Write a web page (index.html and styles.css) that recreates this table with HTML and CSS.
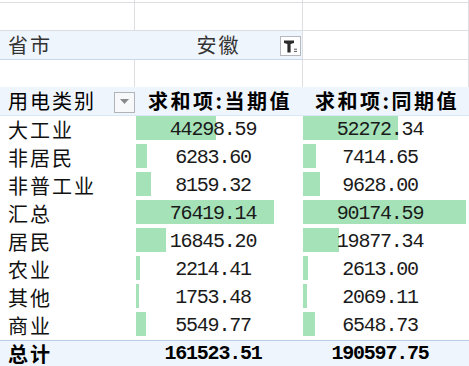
FILE: index.html
```html
<!DOCTYPE html>
<html lang="zh-CN">
<head>
<meta charset="utf-8">
<title>数据透视表</title>
<link rel="stylesheet" href="styles.css">
</head>
<body>
<div class="sheet">
  <div class="row grid r-edge"><div class="cell"></div><div class="cell"></div><div class="cell"></div></div>
  <div class="row grid r-blank"><div class="cell"></div><div class="cell"></div><div class="cell"></div></div>
  <div class="row r-filter">
    <div class="cell fa"><span class="txt">省市</span></div>
    <div class="cell fb"><span class="txt">安徽</span>
      <span class="filter-btn"><svg width="19" height="18" viewBox="0 0 19 18"><path d="M3 3.5h10v2.4l-3.4 1.1v8.6H6.4V7L3 5.9z" fill="#2b2b2b"/><path d="M13 12.2h3M13 14.4h3" stroke="#555" stroke-width="1"/></svg></span>
    </div>
    <div class="cell fc"></div>
  </div>
  <div class="row grid r-blank2"><div class="cell"></div><div class="cell"></div><div class="cell"></div></div>
  <div class="row r-head">
    <div class="cell ha"><span class="txt">用电类别</span><span class="dd-btn"><svg width="9" height="5" viewBox="0 0 9 5"><path d="M0 0h9L4.5 5z" fill="#8a8a8a"/></svg></span></div>
    <div class="cell hv">求和项:当期值</div>
    <div class="cell hv">求和项:同期值</div>
  </div>
  <div class="row r-data">
    <div class="cell la">大工业</div>
    <div class="cell val vb"><span class="bar" style="width:80.1px"></span><span class="num">44298.59</span></div>
    <div class="cell val vc"><span class="bar" style="width:94.5px"></span><span class="num">52272.34</span></div>
  </div>
  <div class="row r-data">
    <div class="cell la">非居民</div>
    <div class="cell val vb"><span class="bar" style="width:11.4px"></span><span class="num">6283.60</span></div>
    <div class="cell val vc"><span class="bar" style="width:13.4px"></span><span class="num">7414.65</span></div>
  </div>
  <div class="row r-data">
    <div class="cell la">非普工业</div>
    <div class="cell val vb"><span class="bar" style="width:14.7px"></span><span class="num">8159.32</span></div>
    <div class="cell val vc"><span class="bar" style="width:17.4px"></span><span class="num">9628.00</span></div>
  </div>
  <div class="row r-data">
    <div class="cell la">汇总</div>
    <div class="cell val vb"><span class="bar" style="width:138.1px"></span><span class="num">76419.14</span></div>
    <div class="cell val vc"><span class="bar" style="width:163px"></span><span class="num">90174.59</span></div>
  </div>
  <div class="row r-data">
    <div class="cell la">居民</div>
    <div class="cell val vb"><span class="bar" style="width:30.4px"></span><span class="num">16845.20</span></div>
    <div class="cell val vc"><span class="bar" style="width:35.9px"></span><span class="num">19877.34</span></div>
  </div>
  <div class="row r-data">
    <div class="cell la">农业</div>
    <div class="cell val vb"><span class="bar" style="width:4px"></span><span class="num">2214.41</span></div>
    <div class="cell val vc"><span class="bar" style="width:4.7px"></span><span class="num">2613.00</span></div>
  </div>
  <div class="row r-data">
    <div class="cell la">其他</div>
    <div class="cell val vb"><span class="bar" style="width:3.2px"></span><span class="num">1753.48</span></div>
    <div class="cell val vc"><span class="bar" style="width:3.7px"></span><span class="num">2069.11</span></div>
  </div>
  <div class="row r-data">
    <div class="cell la">商业</div>
    <div class="cell val vb"><span class="bar" style="width:10px"></span><span class="num">5549.77</span></div>
    <div class="cell val vc"><span class="bar" style="width:11.8px"></span><span class="num">6548.73</span></div>
  </div>
  <div class="row r-total">
    <div class="cell la">总计</div>
    <div class="cell val vb"><span class="num">161523.51</span></div>
    <div class="cell val vc"><span class="num">190597.75</span></div>
  </div>
</div>
</body>
</html>
```

FILE: styles.css
```css
html, body {
  margin: 0;
  padding: 0;
  background: #ffffff;
}
body {
  width: 469px;
  height: 366px;
  overflow: hidden;
  font-family: "Noto Sans CJK SC", "Liberation Serif", serif;
  color: #111;
}
.sheet {
  width: 469px;
}
.row {
  display: grid;
  grid-template-columns: 135px 168px 166px;
}
.cell {
  box-sizing: border-box;
  min-width: 0;
}
.grid .cell {
  border-right: 1px solid #dcdee2;
  border-bottom: 1px solid #dcdee2;
}
.r-edge { height: 3px; }
.r-blank { height: 28px; }
.r-blank2 { height: 28px; }
.r-blank2 .cell { border-bottom: none; }

.txt {
  font-size: 20px;
  letter-spacing: 2px;
  line-height: 28px;
}

.r-filter { height: 28px; }
.r-filter .fa,
.r-filter .fb {
  background: #eff5fc;
  border-bottom: 1px solid #c7d6ea;
}
.r-filter .fa {
  padding-left: 8px;
  color: #333;
}
.r-filter .fb {
  position: relative;
  text-align: center;
  border-right: 1px solid #dcdee2;
  color: #333;
}
.r-filter .fc {
  border-right: 1px solid #dcdee2;
  border-bottom: 1px solid #dcdee2;
}
.filter-btn {
  position: absolute;
  right: 1px;
  top: 5px;
  width: 21px;
  height: 20px;
  box-sizing: border-box;
  border: 1px solid #b5b8bd;
  background: #fff;
  display: flex;
  align-items: center;
  justify-content: center;
}

.r-head {
  height: 29px;
  background: #eff5fc;
  border-bottom: 1px solid #dce7f4;
  box-sizing: border-box;
}
.ha {
  display: flex;
  align-items: center;
  justify-content: space-between;
  padding-left: 8px;
}
.ha .txt { color: #000; }
.dd-btn {
  width: 21px;
  height: 21px;
  box-sizing: border-box;
  border: 1px solid #b0b3b8;
  background: #f7f8fa;
  display: flex;
  align-items: center;
  justify-content: center;
  margin-top: 2px;
  padding-bottom: 1px;
}
.hv {
  font-size: 20px;
  font-weight: bold;
  letter-spacing: 2.5px;
  line-height: 28px;
  text-align: center;
  padding-left: 2px;
  color: #000;
  white-space: nowrap;
}

.r-data { height: 28px; }
.la {
  font-size: 20px;
  letter-spacing: 2px;
  line-height: 28px;
  padding-left: 8px;
  color: #111;
}
.val {
  display: grid;
}
.val > * {
  grid-area: 1 / 1;
}
.vb .bar { margin-left: 1px; }
.bar {
  display: block;
  align-self: start;
  height: 24px;
  background: #a5e2b8;
}
.num {
  font-family: "Liberation Mono", monospace;
  font-size: 20px;
  letter-spacing: -1.2px;
  line-height: 28px;
  text-align: center;
  padding-right: 12px;
  color: #1a1a1a;
  white-space: nowrap;
}

.r-total {
  height: 26px;
  background: #eff5fc;
  border-top: 1px solid #b9cde6;
}
.r-total .la,
.r-total .num {
  font-weight: bold;
  color: #000;
  line-height: 25px;
}
```
